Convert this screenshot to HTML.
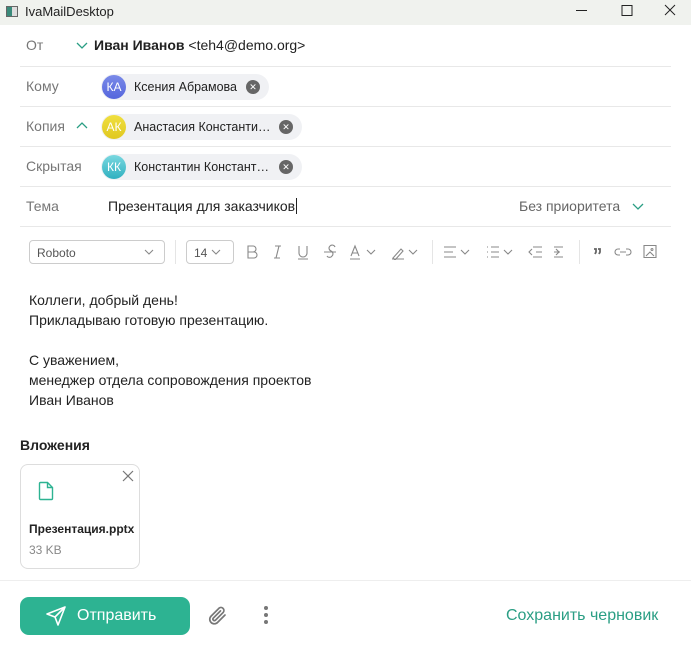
<!DOCTYPE html>
<html><head><meta charset="utf-8"><style>
*{box-sizing:border-box;margin:0;padding:0}
body{width:691px;height:648px;background:#fff;font-family:"Liberation Sans",sans-serif;color:#222;position:relative;overflow:hidden;font-size:14px}
.abs{position:absolute}
.title{left:0;top:0;width:691px;height:25px;background:#f0f2ee;font-size:13px}
.sep{left:20px;width:651px;height:1px;background:#e8e8e8}
.lbl{left:26px;color:#777;font-size:14px}
.chip{height:26px;background:#f0f1f4;border-radius:13px;display:flex;align-items:center}
.av{width:24px;height:24px;border-radius:50%;color:#fff;font-size:12px;display:flex;align-items:center;justify-content:center;margin-left:1px}
.x{width:14px;height:14px;border-radius:50%;background:#666;color:#fff;font-size:9px;display:flex;align-items:center;justify-content:center;margin-left:auto;margin-right:9px}
.chip span{margin-left:8px;font-size:12.5px;color:#222}
svg.i{position:absolute;top:244px}
svg.i *{stroke:#888;fill:none;stroke-width:1.1}
</style></head><body>
<div class="abs title">
 <div class="abs" style="left:6px;top:6px;width:12px;height:11px;border:1px solid #666;background:linear-gradient(90deg,#3a8a7a 50%,#ddd 50%)"></div>
 <div class="abs" style="left:25px;top:4px">IvaMailDesktop</div>
 <svg class="abs" style="left:570px;top:0" width="121" height="25"><path d="M6 10.5h11 M52 5.5h10v10h-10z M95 5l10 10 M105 5l-10 10" stroke="#222" fill="none" stroke-width="1"/></svg>
</div>
<div class="abs lbl" style="top:37px">От</div>
<svg class="abs" style="left:76px;top:40px" width="12" height="10"><path d="M1 3l5 5 5-5" stroke="#2a9e84" fill="none" stroke-width="1.3"/></svg>
<div class="abs" style="left:94px;top:37px;font-size:14px"><b>Иван Иванов</b> &lt;teh4@demo.org&gt;</div>
<div class="abs sep" style="top:66px"></div>
<div class="abs lbl" style="top:78px">Кому</div>
<div class="abs chip" style="left:101px;top:74px;width:168px"><div class="av" style="background:linear-gradient(#7a8ae8,#5566dd)">КА</div><span>Ксения Абрамова</span><div class="x">✕</div></div>
<div class="abs sep" style="top:106px"></div>
<div class="abs lbl" style="top:118px">Копия</div>
<svg class="abs" style="left:76px;top:121px" width="12" height="10"><path d="M1 7l5-5 5 5" stroke="#2a9e84" fill="none" stroke-width="1.3"/></svg>
<div class="abs chip" style="left:101px;top:114px;width:201px"><div class="av" style="background:linear-gradient(#f0e040,#e0c820)">АК</div><span>Анастасия Константи…</span><div class="x">✕</div></div>
<div class="abs sep" style="top:146px"></div>
<div class="abs lbl" style="top:158px">Скрытая</div>
<div class="abs chip" style="left:101px;top:154px;width:201px"><div class="av" style="background:linear-gradient(#7ad8e0,#30b0c0)">КК</div><span>Константин Констант…</span><div class="x">✕</div></div>
<div class="abs sep" style="top:186px"></div>
<div class="abs lbl" style="top:198px">Тема</div>
<div class="abs" style="left:108px;top:198px">Презентация для заказчиков<span style="border-left:1px solid #222;margin-left:1px"></span></div>
<div class="abs" style="left:519px;top:198px;color:#666">Без приоритета</div>
<svg class="abs" style="left:632px;top:201px" width="12" height="10"><path d="M1 3l5 5 5-5" stroke="#2a9e84" fill="none" stroke-width="1.3"/></svg>
<div class="abs sep" style="top:226px"></div>
<div class="abs" style="left:29px;top:240px;width:136px;height:24px;border:1px solid #ccc;border-radius:4px;font-size:12px;color:#555;padding:5px 7px">Roboto</div>
<div class="abs" style="left:175px;top:240px;width:1px;height:24px;background:#e5e5e5"></div>
<div class="abs" style="left:186px;top:240px;width:48px;height:24px;border:1px solid #ccc;border-radius:4px;font-size:12px;color:#555;padding:5px 7px">14</div>
<svg class="i" style="left:0;top:244px" width="691" height="16">
<path d="M145 6l4 4 4-4"/>
<path d="M212 6l4 4 4-4"/>
<path d="M248 2h5a3 3 0 010 6h-5z M248 8h6a3 3 0 010 6h-6z"/>
<path d="M275 2h6 M274 14h6 M279 2l-3 12"/>
<path d="M299 2v7a4 4 0 008 0v-7 M298 15h10"/>
<path d="M335 3a3 3 0 00-5-1 3 3 0 001 5 3 3 0 011 5 3 3 0 01-5 0 M324 8h12"/>
<path d="M351 12l4-10 4 10 M352 9h6 M350 15h10"/>
<path d="M367 6l4 4 4-4"/>
<path d="M393 14l8-9 2 2-8 9z M392 15h12"/>
<path d="M409 6l4 4 4-4"/>
<path d="M444 3h12 M444 8h9 M444 13h12 M461 6l4 4 4-4"/>
<path d="M487 3h1 M487 8h1 M487 13h1 M491 3h8 M491 8h8 M491 13h8 M504 6l4 4 4-4"/>
<path d="M533 3h9 M536 8h6 M533 13h9 M532 5l-3 3 3 3"/>
<path d="M554 3h9 M554 8h6 M554 13h9 M556 5l3 3-3 3"/>
<path d="M594 5h2v3l-1 2 M598 5h2v3l-1 2" style="stroke-width:1.8;stroke:#666"/>
<path d="M620 5h-2a3 3 0 000 6h2 M626 5h2a3 3 0 010 6h-2 M620 8h6"/>
<path d="M644 1.5h12v12h-12z M646 12l4-4 4 4 M653 5.5a1 1 0 100 .1"/>
</svg>
<div class="abs" style="left:432px;top:240px;width:1px;height:24px;background:#e5e5e5"></div>
<div class="abs" style="left:579px;top:240px;width:1px;height:24px;background:#e5e5e5"></div>
<div class="abs" style="left:29px;top:290px;line-height:20px;font-size:14px">Коллеги, добрый день!<br>Прикладываю готовую презентацию.<br><br>С уважением,<br>менеджер отдела сопровождения проектов<br>Иван Иванов</div>
<div class="abs" style="left:20px;top:437px;font-weight:bold;font-size:14px">Вложения</div>
<div class="abs" style="left:20px;top:464px;width:120px;height:105px;border:1px solid #ddd;border-radius:8px">
 <svg class="abs" style="left:17px;top:16px" width="16" height="20"><path d="M1.5 2.5a1 1 0 011-1h7l5 5v11a1 1 0 01-1 1h-11a1 1 0 01-1-1z M9.5 1.5v5h5" stroke="#2db392" fill="none" stroke-width="1.4"/></svg>
 <svg class="abs" style="left:101px;top:5px" width="12" height="12"><path d="M1 1l10 10 M11 1l-10 10" stroke="#777" stroke-width="1.2"/></svg>
 <div class="abs" style="left:8px;top:57px;font-size:12px;font-weight:bold;color:#222">Презентация.pptx</div>
 <div class="abs" style="left:8px;top:78px;font-size:12px;color:#888">33 KB</div>
</div>
<div class="abs" style="left:0;top:580px;width:691px;height:1px;background:#eee"></div>
<div class="abs" style="left:20px;top:597px;width:170px;height:38px;background:#2db392;border-radius:9px;color:#fff;font-size:16px">
 <svg class="abs" style="left:25px;top:8px" width="22" height="22"><path d="M2 9L20 2L13 20L10 12Z M10 12L20 2" stroke="#fff" fill="none" stroke-width="1.6" stroke-linejoin="round"/></svg>
 <div class="abs" style="left:57px;top:10px;font-size:16px">Отправить</div>
</div>
<svg class="abs" style="left:206px;top:604px" width="24" height="24"><path d="M19 11l-7.5 7.5a4.5 4.5 0 01-6.4-6.4l8-8a3 3 0 014.2 4.2l-8 8a1.5 1.5 0 01-2.1-2.1l7.3-7.3" stroke="#777" fill="none" stroke-width="1.7" stroke-linecap="round"/></svg>
<div class="abs" style="left:264px;top:606px;width:4px;height:4px;border-radius:50%;background:#777;box-shadow:0 7px 0 #777,0 14px 0 #777"></div>
<div class="abs" style="left:506px;top:607px;color:#2a9e84;font-size:16px">Сохранить черновик</div>
</body></html>
